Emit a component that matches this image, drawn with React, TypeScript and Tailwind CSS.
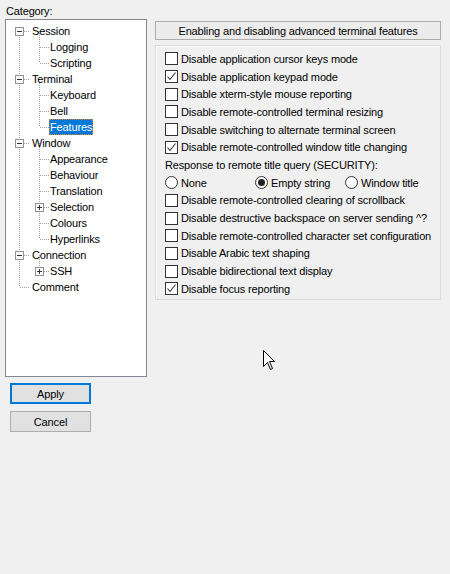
import React from "react";

type Node = { label: string; level: number; exp?: "-" | "+"; selected?: boolean };

const tree: Node[] = [
  { label: "Session", level: 0, exp: "-" },
  { label: "Logging", level: 1 },
  { label: "Scripting", level: 1 },
  { label: "Terminal", level: 0, exp: "-" },
  { label: "Keyboard", level: 1 },
  { label: "Bell", level: 1 },
  { label: "Features", level: 1, selected: true },
  { label: "Window", level: 0, exp: "-" },
  { label: "Appearance", level: 1 },
  { label: "Behaviour", level: 1 },
  { label: "Translation", level: 1 },
  { label: "Selection", level: 1, exp: "+" },
  { label: "Colours", level: 1 },
  { label: "Hyperlinks", level: 1 },
  { label: "Connection", level: 0, exp: "-" },
  { label: "SSH", level: 1, exp: "+" },
  { label: "Comment", level: 0 },
];

const ROW = 16;
const cy = (i: number) => 11 + i * ROW;

function TreeLines() {
  const dot = { stroke: "#a0a0a0", strokeWidth: 1, strokeDasharray: "1 1" };
  const v = (x: number, a: number, b: number) => (
    <line x1={x + 0.5} y1={cy(a)} x2={x + 0.5} y2={cy(b)} {...dot} />
  );
  return (
    <svg className="absolute left-0 top-0" width="140" height="300">
      {v(13, 0, 16)}
      {v(33, 0, 2)}
      {v(33, 3, 6)}
      {v(33, 7, 13)}
      {v(33, 14, 15)}
      {tree.map((n, i) => {
        const x = n.level === 0 ? 13 : 33;
        return (
          <line key={i} x1={x + 1} y1={cy(i) + 0.5} x2={x + 11} y2={cy(i) + 0.5} {...dot} />
        );
      })}
      {tree.map((n, i) => {
        if (!n.exp) return null;
        const x = n.level === 0 ? 13 : 33;
        const y = cy(i);
        return (
          <g key={"e" + i}>
            <rect x={x - 4 + 0.5} y={y - 4 + 0.5} width="8" height="8" fill="#fff" stroke="#919191" />
            <line x1={x - 2} y1={y + 0.5} x2={x + 3} y2={y + 0.5} stroke="#333" />
            {n.exp === "+" && <line x1={x + 0.5} y1={y - 2} x2={x + 0.5} y2={y + 3} stroke="#333" />}
          </g>
        );
      })}
    </svg>
  );
}

function Check({ checked }: { checked?: boolean }) {
  return (
    <span className="w-[13px] h-[13px] border border-[#333] bg-white flex items-center justify-center shrink-0">
      {checked && (
        <svg width="11" height="11" viewBox="0 0 11 11">
          <path d="M1.5 5.5 L4 8.5 L9.5 1.5" fill="none" stroke="#333" strokeWidth="1.1" />
        </svg>
      )}
    </span>
  );
}

function Radio({ on }: { on?: boolean }) {
  return (
    <span className="w-[13px] h-[13px] rounded-full border border-[#333] bg-white flex items-center justify-center shrink-0">
      {on && <span className="w-[7px] h-[7px] rounded-full bg-[#222]" />}
    </span>
  );
}

const checks1: [string, boolean][] = [
  ["Disable application cursor keys mode", false],
  ["Disable application keypad mode", true],
  ["Disable xterm-style mouse reporting", false],
  ["Disable remote-controlled terminal resizing", false],
  ["Disable switching to alternate terminal screen", false],
  ["Disable remote-controlled window title changing", true],
];
const checks2: [string, boolean][] = [
  ["Disable remote-controlled clearing of scrollback", false],
  ["Disable destructive backspace on server sending ^?", false],
  ["Disable remote-controlled character set configuration", false],
  ["Disable Arabic text shaping", false],
  ["Disable bidirectional text display", false],
  ["Disable focus reporting", true],
];

function CheckRow({ label, checked }: { label: string; checked: boolean }) {
  return (
    <div className="h-[17.7px] flex items-center gap-[3px]">
      <Check checked={checked} />
      <span>{label}</span>
    </div>
  );
}

export default function App() {
  return (
    <div
      className="relative w-[450px] h-[574px] bg-[#f0f0f0] text-[#000] text-[11px] tracking-[-0.15px] leading-[14px] whitespace-nowrap flex"
      style={{ fontFamily: '"Liberation Sans", Arial, sans-serif' }}
    >
      <div className="w-[155px] shrink-0 pl-[5px] pt-[4px] flex flex-col">
        <div className="h-[15px] pl-[1px]">Category:</div>
        <div className="relative w-[142px] h-[358px] border border-[#828790] bg-white">
          <TreeLines />
          <div className="relative flex flex-col pt-[3px]">
            {tree.map((n, i) => (
              <div
                key={i}
                className={`h-[16px] flex items-center ${n.level === 0 ? "pl-[25px]" : "pl-[43px]"}`}
              >
                <span
                  className={
                    n.selected
                      ? "bg-[#0078d7] text-white px-[1px] h-[16px] flex items-center outline-1 outline-dotted outline-[#e08030] -outline-offset-1"
                      : "px-[1px]"
                  }
                >
                  {n.label}
                </span>
              </div>
            ))}
          </div>
        </div>
        <div className="mt-[6px] ml-[5px] w-[81px] h-[21px] border-2 border-[#0078d7] bg-[#e1e1e1] flex items-center justify-center">
          Apply
        </div>
        <div className="mt-[7px] ml-[5px] w-[81px] h-[21px] border border-[#adadad] bg-[#e1e1e1] flex items-center justify-center">
          Cancel
        </div>
      </div>
      <div className="w-[286px] pt-[21px] flex flex-col">
        <div className="h-[19px] border border-[#adadad] bg-[#ececec] flex items-center justify-center">
          Enabling and disabling advanced terminal features
        </div>
        <div className="mt-[5px] h-[255px] border border-[#dcdcdc] shadow-[inset_1px_1px_0_#fff] pl-[9px] pt-[4px] flex flex-col">
          {checks1.map(([l, c]) => (
            <CheckRow key={l} label={l} checked={c} />
          ))}
          <div className="h-[17.7px] flex items-center">Response to remote title query (SECURITY):</div>
          <div className="h-[17.7px] grid grid-cols-[90px_90px_90px] items-center">
            <div className="flex items-center gap-[3px]">
              <Radio />
              <span>None</span>
            </div>
            <div className="flex items-center gap-[3px]">
              <Radio on />
              <span>Empty string</span>
            </div>
            <div className="flex items-center gap-[3px]">
              <Radio />
              <span>Window title</span>
            </div>
          </div>
          {checks2.map(([l, c]) => (
            <CheckRow key={l} label={l} checked={c} />
          ))}
        </div>
      </div>
      <svg className="absolute left-[263px] top-[350px]" width="13" height="21" viewBox="0 0 13 21">
        <path
          d="M0.5 0.5 L0.5 16.5 L4.5 12.5 L7.5 19.5 L9.5 18.5 L6.5 11.5 L11.5 11.5 Z"
          fill="#fff"
          stroke="#000"
          strokeLinejoin="miter"
        />
      </svg>
    </div>
  );
}
